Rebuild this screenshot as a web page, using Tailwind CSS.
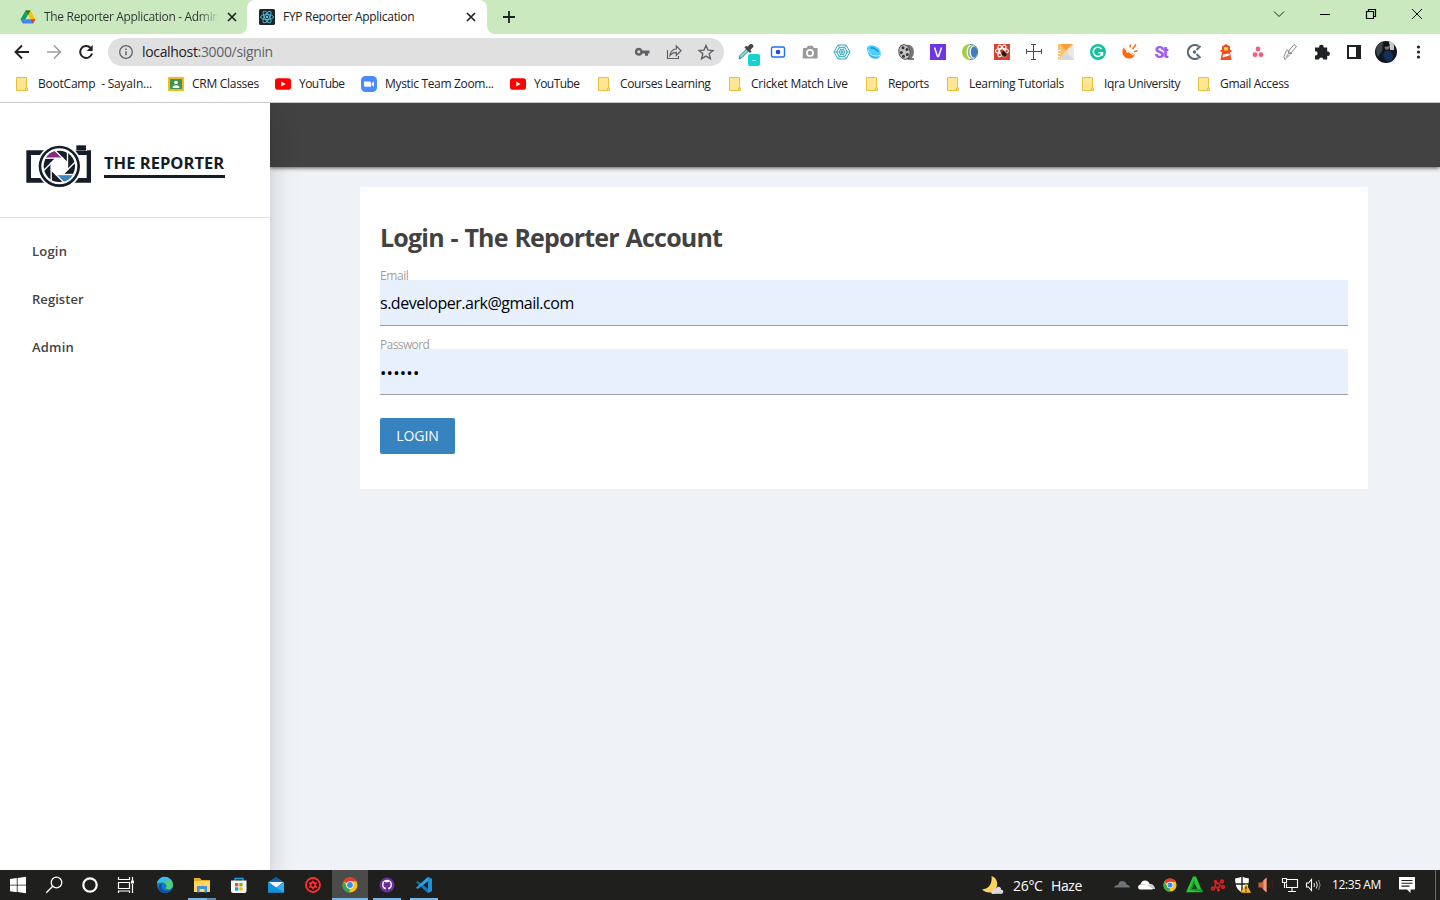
<!DOCTYPE html>
<html lang="en">
<head>
<meta charset="utf-8">
<title>FYP Reporter Application</title>
<script src="https://cdn.jsdelivr.net/npm/@tailwindcss/browser@4"></script>
</head>
<body class="w-[1440px] h-[900px] overflow-hidden flex flex-col bg-white font-['Open_Sans','Noto_Sans',sans-serif] text-[#202124]">

<svg class="hidden">
  <defs>
    <symbol id="folder" viewBox="0 0 16 16"><path d="M2.500 1.500h10V11l1 1v2.500h-11z" fill="#ffe594" stroke="#e8c13c"/><path d="M11.500 14.500V12h1.500" fill="none" stroke="#e8c13c"/></symbol>
    <symbol id="youtube" viewBox="0 0 16 16"><rect y="2.300" width="16" height="11.400" rx="2.800" fill="#f00"/><path d="M6.300 5.600 10.600 8l-4.300 2.400z" fill="#fff"/></symbol>
    <symbol id="chrome" viewBox="0 0 16 16"><circle cx="8" cy="8" r="7.500" fill="#fbc116"/><path d="M8 8 1.500 4.250A7.500 7.500 0 0 1 14.500 4.250L8 4.500z" fill="#e33b2e"/><path d="M1.500 4.250 5 10l3 2-.8 3.450A7.500 7.500 0 0 1 1.500 4.250" fill="#2da94f"/><circle cx="8" cy="8" r="3.700" fill="#fff"/><circle cx="8" cy="8" r="2.900" fill="#4285f4"/></symbol>
  </defs>
</svg>

<!-- tab strip -->
<div class="h-[34px] shrink-0 flex bg-[#cbe9bf] text-[12px]">
  <div class="w-[247px] flex items-center pl-5">
    <svg class="w-4 h-4 shrink-0" viewBox="0 0 16 16"><path d="M5.500 1.500h5L8 5.800 3 14.500.5 10.200z" fill="#13a261"/><path d="M5.500 1.500h5l5 8.700h-5z" fill="#ffc107"/><path d="M.5 10.200h15L13 14.500H3z" fill="#4285f4"/><path d="M5.500 1.500h5L8 5.900z" fill="#0b8043"/><path d="m10.500 10.200h5L13 14.500z" fill="#ea4335"/></svg>
    <div class="ml-2 w-[175px] overflow-hidden whitespace-pre bg-linear-to-r from-[#303336] from-88% to-[#cbe9bf] bg-clip-text text-transparent tracking-[-0.32px]">The Reporter Application - Admin</div>
    <svg class="ml-2 w-[10px] h-[10px] shrink-0" viewBox="0 0 10 10"><path d="m1 1 8 8M9 1 1 9" stroke="#202124" stroke-width="1.700"/></svg>
  </div>
  <div class="relative w-[240px] flex items-center pl-3 bg-white rounded-t-lg">
    <svg class="absolute -left-2 bottom-0 w-2 h-2" viewBox="0 0 8 8"><path d="M8 0v8H0a8 8 0 0 0 8-8" fill="#fff"/></svg>
    <svg class="absolute -right-2 bottom-0 w-2 h-2" viewBox="0 0 8 8"><path d="M0 0v8h8a8 8 0 0 1-8-8" fill="#fff"/></svg>
    <svg class="w-4 h-4 shrink-0" viewBox="0 0 16 16"><rect width="16" height="16" rx="1.500" fill="#20232a"/><g fill="none" stroke="#53c1de" stroke-width=".9"><ellipse cx="8" cy="8" rx="6.500" ry="2.500"/><ellipse cx="8" cy="8" rx="6.500" ry="2.500" transform="rotate(60 8 8)"/><ellipse cx="8" cy="8" rx="6.500" ry="2.500" transform="rotate(120 8 8)"/></g><circle cx="8" cy="8" r="1.300" fill="#53c1de"/></svg>
    <div class="ml-2 w-[183px] whitespace-pre tracking-[-0.3px]">FYP Reporter Application</div>
    <svg class="w-[10px] h-[10px] shrink-0" viewBox="0 0 10 10"><path d="m1 1 8 8M9 1 1 9" stroke="#202124" stroke-width="1.700"/></svg>
  </div>
  <svg class="ml-4 mt-[11px] w-3 h-3" viewBox="0 0 12 12"><path d="M6 0v12M0 6h12" stroke="#202124" stroke-width="1.800"/></svg>
  <div class="ml-auto flex h-7 items-center">
    <svg class="w-[46px] h-7" viewBox="0 0 46 28"><path d="m18 11.500 5 5 5-5" fill="none" stroke="#222"/></svg>
    <svg class="w-[46px] h-7" viewBox="0 0 46 28"><path d="M18 14.500h10" stroke="#000"/></svg>
    <svg class="w-[46px] h-7" viewBox="0 0 46 28"><path d="M18.500 11.500h7v7h-7zM20.500 11.500v-2h7v7h-2" fill="none" stroke="#000" stroke-width="1.200"/></svg>
    <svg class="w-[46px] h-7" viewBox="0 0 46 28"><path d="m18 9 10 10M28 9 18 19" stroke="#000"/></svg>
  </div>
</div>

<!-- toolbar -->
<div class="h-9 shrink-0 flex items-center pl-[6px]">
  <svg class="w-8 h-8" viewBox="0 0 32 32"><path d="M23 16H10m6-6.500L9.500 16l6.500 6.500" fill="none" stroke="#202124" stroke-width="1.900"/></svg>
  <svg class="w-8 h-8" viewBox="0 0 32 32"><path d="M9 16h13m-6-6.500 6.500 6.500-6.500 6.500" fill="none" stroke="#9d9fa2" stroke-width="1.700"/></svg>
  <svg class="w-8 h-8" viewBox="0 0 32 32"><path d="M20.500 11.800A6 6 0 1 0 22 17.500" fill="none" stroke="#202124" stroke-width="2"/><path d="M22.700 9v6h-6z" fill="#202124"/></svg>
  <div class="ml-[6px] w-[616px] h-7 rounded-full bg-[#e0e0e0] flex items-center pl-[10px] pr-[2px]">
    <svg class="w-4 h-4" viewBox="0 0 16 16"><circle cx="8" cy="8" r="6.300" fill="none" stroke="#5f6368" stroke-width="1.300"/><path d="M8 7.200v4M8 4.500v1.500" stroke="#5f6368" stroke-width="1.500"/></svg>
    <div class="ml-2 pb-[2px] text-[14px] whitespace-pre text-[#5f6368] tracking-[-0.34px]"><span class="text-[#202124]">localhost</span>:3000/signin</div>
    <div class="ml-auto flex">
      <svg class="w-8 h-7" viewBox="0 0 32 28"><path fill-rule="evenodd" d="M12.800 9.700a4 4 0 0 1 3.700 2.700H23.500v3H22v2.300h-3v-2.300h-2.500a4 4 0 1 1-3.700-5.700m0 2.600a1.500 1.500 0 1 0 0 3 1.500 1.500 0 0 0 0-3" fill="#5f6368"/></svg>
      <svg class="w-8 h-7" viewBox="0 0 32 28"><path d="M9.500 12v8.500h11V18M12 17.500c.6-4.500 3.500-6.300 6.300-6.500V8l4.800 4.700-4.800 4.600v-3c-2.800 0-4.600 1-6.300 3.200z" fill="none" stroke="#5f6368" stroke-width="1.200"/></svg>
      <svg class="w-8 h-7" viewBox="0 0 32 28"><path d="m16 7.500 2 4.600 5 .4-3.800 3.300 1.200 4.900-4.400-2.600-4.400 2.600 1.200-4.900L9 12.500l5-.4z" fill="none" stroke="#5f6368" stroke-width="1.400"/></svg>
    </div>
  </div>
  <div class="ml-[6px] flex [&>svg]:w-8 [&>svg]:h-8">
    <svg viewBox="0 0 32 32"><path d="m9 23 1-3.500 6.500-6.500 2 2-6.500 6.500z" fill="#7fdadd" stroke="#4a7d85"/><path d="m14.500 11.500 5.500 5.500 1.500-1.500-1.200-1.600 2.800-2.600c1.500-1.800-1.400-4.400-3.300-2.900l-2.500 2.300-1.300-1z" fill="#45474b"/><rect x="18" y="18" width="12" height="12" rx="2" fill="#12d3cf"/><path d="M22.500 24.500h3" stroke="#fff"/></svg>
    <svg viewBox="0 0 32 32"><rect x="9.500" y="11" width="13" height="10" rx="1.500" fill="#fff" stroke="#1a73f8" stroke-width="1.400"/><circle cx="16" cy="16" r="2.300" fill="#2b49d0"/></svg>
    <svg viewBox="0 0 32 32"><path fill-rule="evenodd" d="M9 12h3.500l1.500-2.300h4.500L20 12h3q.6 0 .6.700V21.500q0 1-.8 1H9.600q-.9 0-.9-1zM16 13a3.900 3.900 0 1 0 0 7.800 3.900 3.900 0 0 0 0-7.800" fill="#999"/><circle cx="16" cy="17" r="2.200" fill="#999"/></svg>
    <svg viewBox="0 0 32 32"><g fill="none" stroke="#2eaabd"><path d="m12 9h8l4 7-4 7h-8l-4-7z"/><path d="M13.300 11.300h5.400l2.700 4.700-2.700 4.700h-5.400L10.600 16z"/><path d="M14.600 13.600h2.800l1.400 2.400-1.400 2.400h-2.800L13.200 16zM12 9l8 14M20 9l-8 14M8 16h16" stroke-width=".8"/></g></svg>
    <svg viewBox="0 0 32 32"><path d="M9.300 11.500c-.5 5 2 10.500 7.200 11.300 4 .5 6-2 6.300-5z" fill="#35b8f8"/><ellipse cx="16" cy="14.300" rx="7.300" ry="4.200" fill="#4dd2ff" transform="rotate(28 16 14.300)"/><path d="M12.500 12c3-.5 6.500 1.500 7.800 4" stroke="#1c94e8" stroke-width="1.600" fill="none"/><path d="M10 14.500c1.500 4.500 6.500 6.500 12 5" stroke="#d3f3ff" fill="none"/></svg>
    <svg viewBox="0 0 32 32"><ellipse cx="18" cy="16" rx="6" ry="7.300" fill="#777"/><ellipse cx="14.500" cy="16" rx="5.700" ry="7.300" fill="#c5c5c5" stroke="#555" transform="rotate(-12 14.500 16)"/><g fill="#333"><circle cx="13" cy="11.800" r="1.500"/><circle cx="17" cy="13.500" r="1.500"/><circle cx="11.300" cy="16.500" r="1.500"/><circle cx="17.300" cy="18.500" r="1.500"/><circle cx="13.500" cy="20.300" r="1.500"/></g><path d="M18 23h6" stroke="#444" stroke-width="1.400"/></svg>
    <svg viewBox="0 0 32 32"><rect x="8" y="8" width="16" height="16" fill="#6d35e8"/><path d="m12.500 11.500 3 9h1l3-9" fill="none" stroke="#fff" stroke-width="1.500"/></svg>
    <svg viewBox="0 0 32 32"><circle cx="16" cy="16" r="8" fill="#a9cc3e"/><path d="M16 8a8 8 0 0 1 0 16z" fill="#2f6fb0"/><ellipse cx="17.500" cy="16" rx="5" ry="7.300" fill="#fff"/><ellipse cx="18.300" cy="16" rx="4.500" ry="6.800" fill="#7fb3a0"/><ellipse cx="19.300" cy="16" rx="3.800" ry="6" fill="#fff"/><ellipse cx="20" cy="16" rx="3.200" ry="5.500" fill="#3f7fbe"/></svg>
    <svg viewBox="0 0 32 32"><rect x="8" y="8" width="16" height="16" fill="#d6402f"/><g fill="none" stroke="#fff" stroke-width="1.100"><ellipse cx="16" cy="15" rx="6.500" ry="2.400"/><ellipse cx="16" cy="15" rx="6.500" ry="2.400" transform="rotate(60 16 15)"/><ellipse cx="16" cy="15" rx="6.500" ry="2.400" transform="rotate(120 16 15)"/></g><ellipse cx="18" cy="18" rx="2.300" ry="3" fill="#33150f" transform="rotate(-40 18 18)"/></svg>
    <svg viewBox="0 0 32 32"><path d="M8.500 15.500h15M15.500 8.500v15M8.500 13v5M23.500 13v5M13 8.500h5M13 23.500h5" stroke="#4a4a4a"/></svg>
    <svg viewBox="0 0 32 32"><rect x="8" y="8" width="16" height="16" rx="1.500" fill="#e9e9e9"/><path d="M8 8h15L8 24z" fill="#ffbe68"/><path d="m10 8 5.500 6L23 8z" fill="#ff9d3a"/><path d="m16 15 8 9H8z" fill="#dadada"/><path d="M8 14.500h3M8 17.500h3M8 20.500h2" stroke="#fff"/></svg>
    <svg viewBox="0 0 32 32"><circle cx="16" cy="16" r="8" fill="#15c39a"/><path d="M19.500 13a4.600 4.600 0 1 0 .9 3.700H16.500m3.900 0v3" fill="none" stroke="#fff" stroke-width="1.500"/></svg>
    <svg viewBox="0 0 32 32"><path d="M9.500 11.500c-3 5 0 10.500 4.500 11 4 .4 6.500-2 6.700-4z" fill="#ff6a0d"/><path d="m10.500 12.500 9 6.500" stroke="#fff" stroke-width="1.200"/><circle cx="13.500" cy="15.500" r="1.200" fill="#fff"/><path d="m16 11.500.5-3M18.700 13l3.300-4.500M20 15.700l3.500-1" stroke="#ff6a0d" stroke-width="1.500"/></svg>
    <svg viewBox="0 0 32 32"><text x="8.500" y="21.500" font-family="Roboto" font-size="16" font-weight="900" fill="#a05cf5" textLength="14">St</text></svg>
    <svg viewBox="0 0 32 32"><path d="M20.500 10a7 7 0 1 0 0 12" fill="none" stroke="#5a6b75" stroke-width="2.200"/><circle cx="16.500" cy="16" r="1.700" fill="#5a6b75"/><path d="m18.500 14 4-4M18.500 18l4 4" stroke="#5a6b75" stroke-width="1.800"/></svg>
    <svg viewBox="0 0 32 32"><path d="M12 10.500 16 8l4 2.500V14h1.500v2H20l1.500 8h-11L12 16h-1.500v-2H12z" fill="#f44b21"/><rect x="14" y="11" width="4" height="3.500" rx="1" fill="#ffd54a"/><path d="m13 18.500 6.500-1v2l-7 2z" fill="#fff"/></svg>
    <svg viewBox="0 0 32 32"><g fill="#f65c78"><circle cx="16" cy="13" r="2.400"/><circle cx="13" cy="18.700" r="2.400"/><circle cx="19" cy="18.700" r="2.400"/></g></svg>
    <svg viewBox="0 0 32 32"><path d="m20 8.500 2.500 2-6.500 7.500-2-2zM12.500 13.500l5.500 4.500M12.500 14.500 10 20.500l1 3 5-5M12 21l3-4" fill="none" stroke="#8b8b8b"/></svg>
    <svg viewBox="0 0 32 32"><path d="M9 11.500h4.200a2.200 2.200 0 1 1 4.300 0h3.700v4a2.200 2.200 0 1 1 0 4.300v3.700h-4a2 2 0 1 0-4.100 0H9v-4a2.100 2.100 0 1 0 0-4.100z" fill="#202124"/></svg>
    <svg viewBox="0 0 32 32"><path d="M9 9h14v14H9zM11 11v10h7V11z" fill="#202124" fill-rule="evenodd"/></svg>
    <svg viewBox="0 0 32 32"><circle cx="16" cy="16" r="11" fill="#12161f"/><path d="M6.500 11c2-3 4-4.500 6.500-5l-1 9-4 6q-2.500-4-1.500-10z" fill="#3c474d"/><path d="M15 15c2-1 5-1 7 2s1 6-1 8h-5l-3-6z" fill="#16305c"/><circle cx="17" cy="11.500" r="2.300" fill="#8b6a62"/><path d="M19 6h3l2 3v5h-4z" fill="#c2ccd3"/><path d="M14 9q3-4 6 0l-2 1.500h-4z" fill="#0d1016"/></svg>
    <svg viewBox="0 0 32 32"><g fill="#202124"><circle cx="16.500" cy="11" r="1.600"/><circle cx="16.500" cy="16" r="1.600"/><circle cx="16.500" cy="21" r="1.600"/></g></svg>
  </div>
</div>

<!-- bookmarks -->
<div class="h-[33px] pb-[4px] shrink-0 flex items-center pl-[14px] text-[12px] tracking-[-0.33px] whitespace-pre border-b border-[#c9c9c9] [&>div]:flex [&>div]:items-center [&>div]:gap-2 [&>div]:shrink-0 [&_svg]:w-4 [&_svg]:h-4 [&_svg]:shrink-0">
  <div class="w-[154px]"><svg><use href="#folder"/></svg><span class="tracking-[-0.22px]">BootCamp  - SayaIn...</span></div>
  <div class="w-[107px]"><svg viewBox="0 0 16 16"><rect y="1" width="16" height="14" rx="1" fill="#f5ba15"/><rect x="2" y="3" width="12" height="10" fill="#3f9455"/><circle cx="8" cy="6.500" r="1.800" fill="#fff"/><path d="M4.500 12q0-2.800 3.500-2.800t3.500 2.800z" fill="#fff"/></svg><span class="tracking-[-0.28px]">CRM Classes</span></div>
  <div class="w-[86px]"><svg><use href="#youtube"/></svg><span class="tracking-[-0.55px]">YouTube</span></div>
  <div class="w-[149px]"><svg viewBox="0 0 16 16"><rect width="16" height="16" rx="4.500" fill="#4a8cff"/><path d="M3 5.500h5.500q1.500 0 1.500 1.500v3.700H4.500Q3 10.700 3 9.200zM10.700 7.200 13 5.500v5.200l-2.300-1.700z" fill="#fff"/></svg><span>Mystic Team Zoom...</span></div>
  <div class="w-[86px]"><svg><use href="#youtube"/></svg><span class="tracking-[-0.55px]">YouTube</span></div>
  <div class="w-[131px]"><svg><use href="#folder"/></svg><span class="tracking-[-0.42px]">Courses Learning</span></div>
  <div class="w-[137px]"><svg><use href="#folder"/></svg><span class="tracking-[-0.28px]">Cricket Match Live</span></div>
  <div class="w-[81px]"><svg><use href="#folder"/></svg><span class="tracking-[-0.4px]">Reports</span></div>
  <div class="w-[135px]"><svg><use href="#folder"/></svg><span>Learning Tutorials</span></div>
  <div class="w-[116px]"><svg><use href="#folder"/></svg><span>Iqra University</span></div>
  <div><svg><use href="#folder"/></svg><span>Gmail Access</span></div>
</div>

<!-- web page -->
<div class="h-[767px] shrink-0 flex bg-[#eff3f7] overflow-hidden">
  <aside class="relative z-10 w-[270px] shrink-0 bg-white shadow-[0_8px_10px_-5px_rgba(0,0,0,0.2),0_16px_24px_2px_rgba(0,0,0,0.07),0_6px_30px_5px_rgba(0,0,0,0.06)]">
    <div class="h-[115px] border-b border-[#e0e0e0] pt-[39px] pl-6 flex items-start">
      <svg class="w-[70px] h-[50px] shrink-0" viewBox="72 36 210 150">
        <path d="M79 61h194v97H79z" fill="#141d28"/><path d="M93 75h167v69H93z" fill="#fff"/>
        <path d="M226 42h35v21h-35z" fill="#fff"/><path d="M229 46h29v16h-29z" fill="#141d28"/>
        <circle cx="178" cy="109" r="67" fill="#fff"/>
        <circle cx="178" cy="109" r="47" fill="#141d28"/>
        <path d="M136 86A47 47 0 0 1 164 64L189 86z" fill="#832b80"/>
        <path d="M220 132A47 47 0 0 1 192 154L167 132z" fill="#3586c4"/>
        <circle cx="178" cy="109" r="26" fill="#fff"/>
        <g stroke="#fff" stroke-width="4">
          <path id="blade" d="M190 84.500H134"/>
          <use href="#blade" transform="rotate(45 178 109)"/><use href="#blade" transform="rotate(90 178 109)"/><use href="#blade" transform="rotate(135 178 109)"/><use href="#blade" transform="rotate(180 178 109)"/><use href="#blade" transform="rotate(225 178 109)"/><use href="#blade" transform="rotate(270 178 109)"/><use href="#blade" transform="rotate(315 178 109)"/>
        </g>
        <circle cx="178" cy="109" r="58" fill="none" stroke="#141d28" stroke-width="8"/>
      </svg>
      <div class="ml-[10px] mt-[11px] w-[121px] h-[25px] border-b-[3px] border-[#141d28] text-[16.5px] leading-[20px] font-bold text-[#141d28] whitespace-pre tracking-[0.02px]">THE REPORTER</div>
    </div>
    <nav class="flex flex-col pt-[9px] pl-8 text-[13px] font-semibold text-[#444] tracking-[0.2px] [&>a]:h-12 [&>a]:pt-px [&>a]:flex [&>a]:items-center">
      <a>Login</a><a class="tracking-[0.05px]">Register</a><a>Admin</a>
    </nav>
  </aside>
  <main class="flex-1">
    <div class="h-16 bg-[#424242] shadow-[0_1px_4px_rgba(0,0,0,0.65)]"></div>
    <section class="mt-5 ml-[90px] w-[1008px] h-[302px] bg-white px-5 pt-[31px] flex flex-col items-start">
      <h1 class="h-10 text-[25px] leading-[39px] font-bold text-[#424242] whitespace-pre tracking-[-0.8px] [word-spacing:1px]">Login - The Reporter Account</h1>
      <label class="mt-[9px] h-[13px] text-[12px] leading-[18px] text-[#9e9e9e] tracking-[-0.4px]">Email</label>
      <div class="w-full h-[46px] bg-[#e8f0fe] border-b border-[#9e9e9e] text-[16px] leading-[47px] text-black tracking-[-0.48px]">s.developer.ark@gmail.com</div>
      <label class="mt-[10px] h-[13px] text-[12px] leading-[18px] text-[#9e9e9e] tracking-[-0.6px]">Password</label>
      <div class="w-full h-[46px] bg-[#e8f0fe] border-b border-[#9e9e9e] text-[17px] leading-[47px] text-black tracking-[0.2px]">••••••</div>
      <button class="mt-[23px] w-[75px] h-9 pb-[2px] rounded-[2px] bg-[#3683c0] text-white text-[14px] font-medium tracking-[-0.1px]">LOGIN</button>
    </section>
  </main>
</div>

<!-- taskbar -->
<div class="h-[30px] shrink-0 flex bg-[#1f1f1d] text-white">
  <div class="flex [&>svg]:w-9 [&>svg]:h-[30px]">
    <svg viewBox="0 0 36 30"><path d="m10 9 6.800-1v6.700H10zM17.600 7.900 26 6.800v7.900h-8.400zM10 15.500h6.800v6.700l-6.800-.9zM17.600 15.500H26v7.800l-8.400-1.200z" fill="#fff"/></svg>
    <svg viewBox="0 0 36 30"><circle cx="20.500" cy="12.500" r="5.300" fill="none" stroke="#fff" stroke-width="1.300"/><path d="m16.700 16.300-6.400 6.400" stroke="#fff" stroke-width="1.400"/></svg>
    <svg viewBox="0 0 36 30"><circle cx="18" cy="15" r="6.700" fill="none" stroke="#fff" stroke-width="2.200"/></svg>
    <svg viewBox="0 0 36 30"><path d="M10.500 7v2.500h11V7M10.500 12.500h11v6h-11zM10.500 23v-2h11v2M24.500 7v3.500M24.500 14v9" fill="none" stroke="#fff" stroke-width="1.200"/><path d="M23 10.500h3v3h-3z" fill="#fff"/></svg>
  </div>
  <div class="ml-[3px] flex gap-px [&>div]:w-9 [&>div]:h-[30px] [&>div]:relative [&_svg]:w-9 [&_svg]:h-[30px]">
    <div><svg viewBox="0 0 36 30"><circle cx="18" cy="15" r="8" fill="#1879cc"/><path d="M10 13.500C12 5 25.500 5 26 15c0 4.500-5 5-7.500 3.500 2-2 1-5.500-3-6-2.500-.3-4 0-5.500 1" fill="#52cf7e"/><path d="M10 13.500C12 5.500 20 5.500 22.500 9c-2 .5-3 2-3.500 4-2-1.500-6-1.500-9 .5" fill="#36bdea"/><path d="M15 13.500c-2 5 2 9 8.500 6.500-3 4-9.500 3.500-11.500-.5-1.200-3 0-5.500 3-6" fill="#0f4f9e"/></svg></div>
    <div><svg viewBox="0 0 36 30"><path d="M10 8h6l1.500 2H26v12H10z" fill="#e9a921"/><path d="M10 11h16v11H10z" fill="#ffd661"/><path d="M13 22.500V16h10v6.500h-2.500V19h-5v3.500z" fill="#3f92dd"/></svg><i class="absolute left-1 bottom-0 w-[19px] h-[2px] bg-[#76b9ed]"></i><i class="absolute left-[23px] bottom-0 w-[9px] h-[2px] bg-[#5a8cb5]"></i></div>
    <div><svg viewBox="0 0 36 30"><path d="M14 11V8.500h8V11" fill="none" stroke="#1fa6de" stroke-width="1.300"/><path d="M10 10.500h15.500V21q0 2-2 2H12q-2 0-2-2z" fill="#f5f5f5"/><path d="M14 13h3.300v3.300H14z" fill="#f25022"/><path d="M18.300 13h3.300v3.300h-3.300z" fill="#7fba00"/><path d="M14 17.300h3.300v3.300H14z" fill="#00a4ef"/><path d="M18.300 17.300h3.300v3.300h-3.300z" fill="#ffb900"/></svg></div>
    <div><svg viewBox="0 0 36 30"><path d="m10 12 8-5 8 5v10H10z" fill="#1261ad"/><path d="M11 12h14l-7 6z" fill="#f3f3f3"/><path d="m10 12 8 6 8-6v10.500H10z" fill="#2fb0f2"/><path d="m10 12 16 10.500H10z" fill="#1490df"/><path d="M11 12h14l-7 5z" fill="#f3f3f3"/></svg></div>
    <div><svg viewBox="0 0 36 30"><circle cx="18" cy="15" r="7" fill="#260f0f" stroke="#fb3030" stroke-width="1.900"/><circle cx="18" cy="15" r="2.500" fill="none" stroke="#fb3030" stroke-width="1.800"/><path d="M18 10.500v2M18 17.500v2M14 12.700l2 1.200M20 16.200l2 1.200M14 17.300l2-1.200M20 13.800l2-1.200" stroke="#fb3030" stroke-width="1.500"/></svg></div>
    <div class="bg-[#4b4b49]"><svg viewBox="0 0 36 30"><use href="#chrome" x="10" y="7" width="16" height="16"/></svg><i class="absolute left-0 bottom-0 w-9 h-[2px] bg-[#76b9ed]"></i></div>
    <div><svg viewBox="0 0 36 30"><circle cx="18" cy="15" r="7.500" fill="#6b2f9c"/><circle cx="18" cy="14.800" r="5" fill="#fff"/><path d="M15 11.500 16.500 12.300h3l1.500-.8.300 2c1 2-.3 4-2 4v3h-2.600v-3c-2 0-3-2-2-4z" fill="#6b2f9c"/></svg><i class="absolute left-1 bottom-0 w-7 h-[2px] bg-[#76b9ed]"></i></div>
    <div><svg viewBox="0 0 36 30"><path d="m22 7 4 1.800v12.400L22 23l-9-8z" fill="#1f8fd8"/><path d="M22 11v8l-5-4z" fill="#1f1f1d"/><path d="M10 12.200 11.500 11 22 19v4z" fill="#0f74b8"/><path d="M10 17.800 11.500 19 22 11V7z" fill="#2ba1ea"/></svg><i class="absolute left-1 bottom-0 w-7 h-[2px] bg-[#76b9ed]"></i></div>
  </div>
  <div class="ml-auto flex items-center">
    <svg class="w-6 h-[30px]" viewBox="0 0 24 30"><path d="M11.500 6c6 2 7.500 9 3.500 14-3 3.500-9 3.500-13-.5 7-.5 10.500-6 9.500-13.500" fill="#fbd45b"/><path d="M12 24q-2-2 .5-3 .5-3.500 3.500-2.500 1-2.500 3.500-1.500 2 .5 1.500 2.500 3 .5 2 3-.5 1.500-2.500 1.500z" fill="#d8dbe0"/><path d="M12 24q4-1.500 10.500-1.300l-1 1.300z" fill="#f3b43c"/></svg>
    <div class="ml-[9px] w-[38px] text-[14px] whitespace-pre tracking-[-0.3px]">26°C</div>
    <div class="w-[59px] text-[14px] whitespace-pre tracking-[-0.4px]">Haze</div>
    <div class="flex [&>svg]:w-6 [&>svg]:h-[30px]">
      <svg viewBox="0 0 24 30"><path d="M4 17.500q.5-2.500 4-2.500 1-4 4-4 4 0 4.500 3.500 3 .5 3.500 3z" fill="#6d7277"/></svg>
      <svg viewBox="0 0 24 30"><path d="M6 19.500q-2-.5-2-2.500 0-2 2.500-2.500 1-4 4.500-4t4.700 3.500q4 0 4.300 3 0 2-2 2.500z" fill="#fff"/><path d="M5 15q4-2 8 0l6 4h2q0-4-4.700-4.500" fill="#cfcfcf"/></svg>
      <svg viewBox="0 0 24 30"><use href="#chrome" x="5" y="8" width="14" height="14"/></svg>
      <svg viewBox="0 0 24 30"><path d="M11 6.500h3l6.500 15.800H4z" fill="#27c734"/><path d="m12 12.500 3.800 7H8.500z" fill="#1a4520"/><path d="m8 20 4-10 1 2-3 7h10l1 3z" fill="#0d9b1b"/></svg>
      <svg viewBox="0 0 24 30"><g fill="none" stroke="#dc2022" stroke-width="1.700"><circle cx="11.500" cy="15.500" r="2.300"/><circle cx="16" cy="11.500" r="1.300"/><circle cx="17" cy="17" r="1.300"/><circle cx="7" cy="18.500" r="1.300"/><circle cx="9.500" cy="11.500" r=".8"/><circle cx="12.500" cy="20" r=".8"/></g></svg>
      <svg viewBox="0 0 24 30"><path d="M12 6.500q3 1.800 6.800 1.700c.2 7-1.300 11-6.800 14.300-5.500-3.300-7-7.300-6.800-14.300Q9 8.300 12 6.500" fill="#fff"/><path d="M12 6v17M4.500 14h15" stroke="#1f1f1d" stroke-width="1.400"/><path d="m16 13.500 5 9.300H11z" fill="#ffb91e"/><path d="M16 16.500v3M16 20.500v1.300" stroke="#222" stroke-width="1.200"/></svg>
      <svg viewBox="0 0 24 30"><path d="M4.500 12.500h3l5-5v15l-5-5h-3z" fill="#cb5e3f"/><path d="m12.500 7.500v15l-3-3v-9z" fill="#f49a79"/><path d="M15 12q1.300 3 0 6M18 10.500q1.800 4.500 0 9" fill="none" stroke="#4a221a"/></svg>
      <svg viewBox="0 0 24 30"><path d="M8.500 9.500h11v8h-11v-4M14 17.500v4M10 21.500h8M4.500 8.500h4v4h-4zM6.500 12.500v5.500" fill="none" stroke="#fff" stroke-width="1.100"/></svg>
      <svg viewBox="0 0 24 30"><path d="M4.500 13h2l3-3.500v11l-3-3.500h-2z" fill="none" stroke="#fff" stroke-width="1.100"/><path d="M12 13q1 2 0 4M14.300 11.500q2 3.500 0 7" fill="none" stroke="#ddd" stroke-width="1"/><path d="M16.600 10q3 5 0 10" fill="none" stroke="#888" stroke-width="1"/></svg>
    </div>
    <div class="ml-[6px] w-[64px] text-[12px] whitespace-pre tracking-[-0.4px]">12:35 AM</div>
    <svg class="w-6 h-[30px]" viewBox="0 0 24 30"><path d="M3 7h16v12.500h-4.500V23L11 19.500H3z" fill="#fff"/><path d="M5.500 10.500h11M5.500 13.300h11M5.500 16.100h8" stroke="#1f1f1d" stroke-width="1.100"/></svg>
    <div class="ml-[15px] w-[5px] h-[30px] border-l border-[#6a6a68]"></div>
  </div>
</div>
</body>
</html>
